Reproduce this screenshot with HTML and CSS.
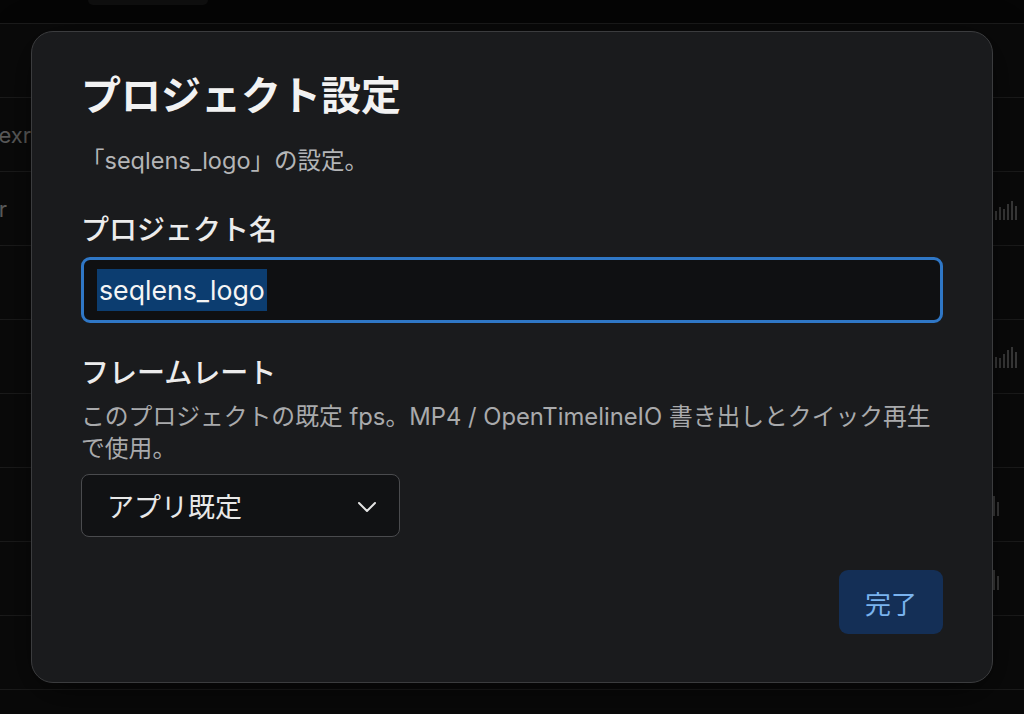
FILE: index.html
```html
<!DOCTYPE html>
<html lang="ja">
<head>
    <meta charset="utf-8">
    <title>プロジェクト設定</title>
    <link rel="stylesheet" href="styles.css">
</head>
<body>
    <div class="page">
        <div class="topbar">
            <div class="tab"></div>
        </div>
        <div class="row"><div class="name"></div></div>
        <div class="row"><div class="name">render_0042.exr</div></div>
        <div class="row"><div class="name short">Folder</div><div class="wave"><i style="height:9px"></i><i style="height:13px"></i><i style="height:11px"></i><i style="height:16px"></i><i style="height:19px"></i><i style="height:14px"></i></div></div>
        <div class="row"><div class="name"></div></div>
        <div class="row"><div class="name"></div><div class="wave"><i style="height:11px"></i><i style="height:10px"></i><i style="height:14px"></i><i style="height:18px"></i><i style="height:21px"></i><i style="height:16px"></i></div></div>
        <div class="row"><div class="name"></div></div>
        <div class="row"><div class="name"></div><div class="wave shifted"><i style="height:20px"></i><i style="height:14px"></i></div></div>
        <div class="row"><div class="name"></div><div class="wave shifted"><i style="height:20px"></i><i style="height:14px"></i></div></div>
        <div class="row"><div class="name"></div></div>
    </div>

    <div class="overlay">
        <div class="dialog">
            <h1 class="title">プロジェクト設定</h1>
            <p class="subtitle">「seqlens_logo」の設定。</p>

            <label class="field-label">プロジェクト名</label>
            <div class="text-field">
                <span class="selected">seqlens_logo</span>
            </div>

            <label class="field-label second">フレームレート</label>
            <p class="hint">このプロジェクトの既定 fps。MP4 / OpenTimelineIO 書き出しとクイック再生で使用。</p>
            <div class="select">
                <span>アプリ既定</span>
                <svg class="chevron" width="20" height="12" viewBox="0 0 20 12">
                    <path d="M2 2 L10 10 L18 2" fill="none" stroke="#e4e4e4" stroke-width="2" stroke-linecap="round" stroke-linejoin="round"/>
                </svg>
            </div>

            <div class="actions">
                <button class="done">完了</button>
            </div>
        </div>
    </div>
</body>
</html>
```

FILE: styles.css
```css
body {
    margin: 0;
    background: #090909;
    font-family: Inter, "Noto Sans CJK JP", sans-serif;
    overflow: hidden;
}
.page {
    width: 1024px;
    height: 714px;
}
.topbar {
    height: 23px;
    background: #050505;
    border-bottom: 1px solid #1b1b1b;
}
.tab {
    width: 120px;
    height: 5px;
    margin-left: 88px;
    background: #0f0f0f;
    border-radius: 0 0 6px 6px;
}
.row {
    height: 73px;
    border-bottom: 1px solid #1b1b1b;
    display: flex;
    align-items: center;
    justify-content: space-between;
    background: #0a0a0a;
}
.name {
    width: 31px;
    overflow: hidden;
    white-space: nowrap;
    display: flex;
    justify-content: flex-end;
    font-size: 22px;
    color: #5c5c5c;
}
.name.short {
    width: 7px;
}
.wave {
    display: flex;
    align-items: flex-end;
    gap: 2px;
    height: 22px;
    margin-right: 7px;
}
.wave i {
    display: block;
    width: 2px;
    background: #3a3a3a;
}
.wave.shifted {
    margin-right: 25px;
}
.overlay {
    position: absolute;
    top: 0;
    left: 0;
    width: 1024px;
    height: 714px;
}
.dialog {
    position: absolute;
    top: 31px;
    left: 31px;
    width: 962px;
    height: 652px;
    box-sizing: border-box;
    padding: 39px 49px 49px;
    background: #1a1b1d;
    border: 1px solid #3b3c3e;
    border-radius: 22px;
    box-shadow: 0 10px 40px rgba(0, 0, 0, 0.5);
}
.title {
    margin: 0;
    font-size: 40px;
    line-height: 50px;
    font-weight: 700;
    color: #f2f2f2;
    height: 50px;
}
.subtitle {
    margin: 25px 0 0;
    font-size: 23.5px;
    line-height: 30px;
    color: #b4b5b7;
}
.field-label {
    display: block;
    margin-top: 36px;
    font-size: 28px;
    line-height: 36px;
    font-weight: 500;
    color: #ececec;
}
.field-label.second {
    margin-top: 32px;
}
.text-field {
    margin-top: 9px;
    height: 66px;
    box-sizing: border-box;
    border: 3px solid #2f77c6;
    border-radius: 9px;
    background: #0f1012;
    padding: 9px 13px;
    font-size: 26.7px;
    color: #f5f5f5;
}
.selected {
    display: inline-block;
    line-height: 42px;
    padding: 0 2px;
    background: #0c3d70;
}
.hint {
    margin: 10px 0 0;
    font-size: 23.8px;
    line-height: 32px;
    color: #a9aaac;
}
.select {
    margin-top: 9px;
    width: 319px;
    height: 63px;
    box-sizing: border-box;
    border: 1px solid #4a4b4e;
    border-radius: 8px;
    background: #111214;
    display: flex;
    align-items: center;
    justify-content: space-between;
    padding: 0 22px 0 25px;
    font-size: 27px;
    color: #e8e8e8;
}
.chevron {
    margin-top: 2px;
}
.actions {
    margin-top: 33px;
    display: flex;
    justify-content: flex-end;
}
.done {
    width: 104px;
    height: 64px;
    border: none;
    border-radius: 9px;
    background: #142f56;
    color: #7ab3ee;
    font-family: inherit;
    font-size: 26px;
    cursor: pointer;
}
```
